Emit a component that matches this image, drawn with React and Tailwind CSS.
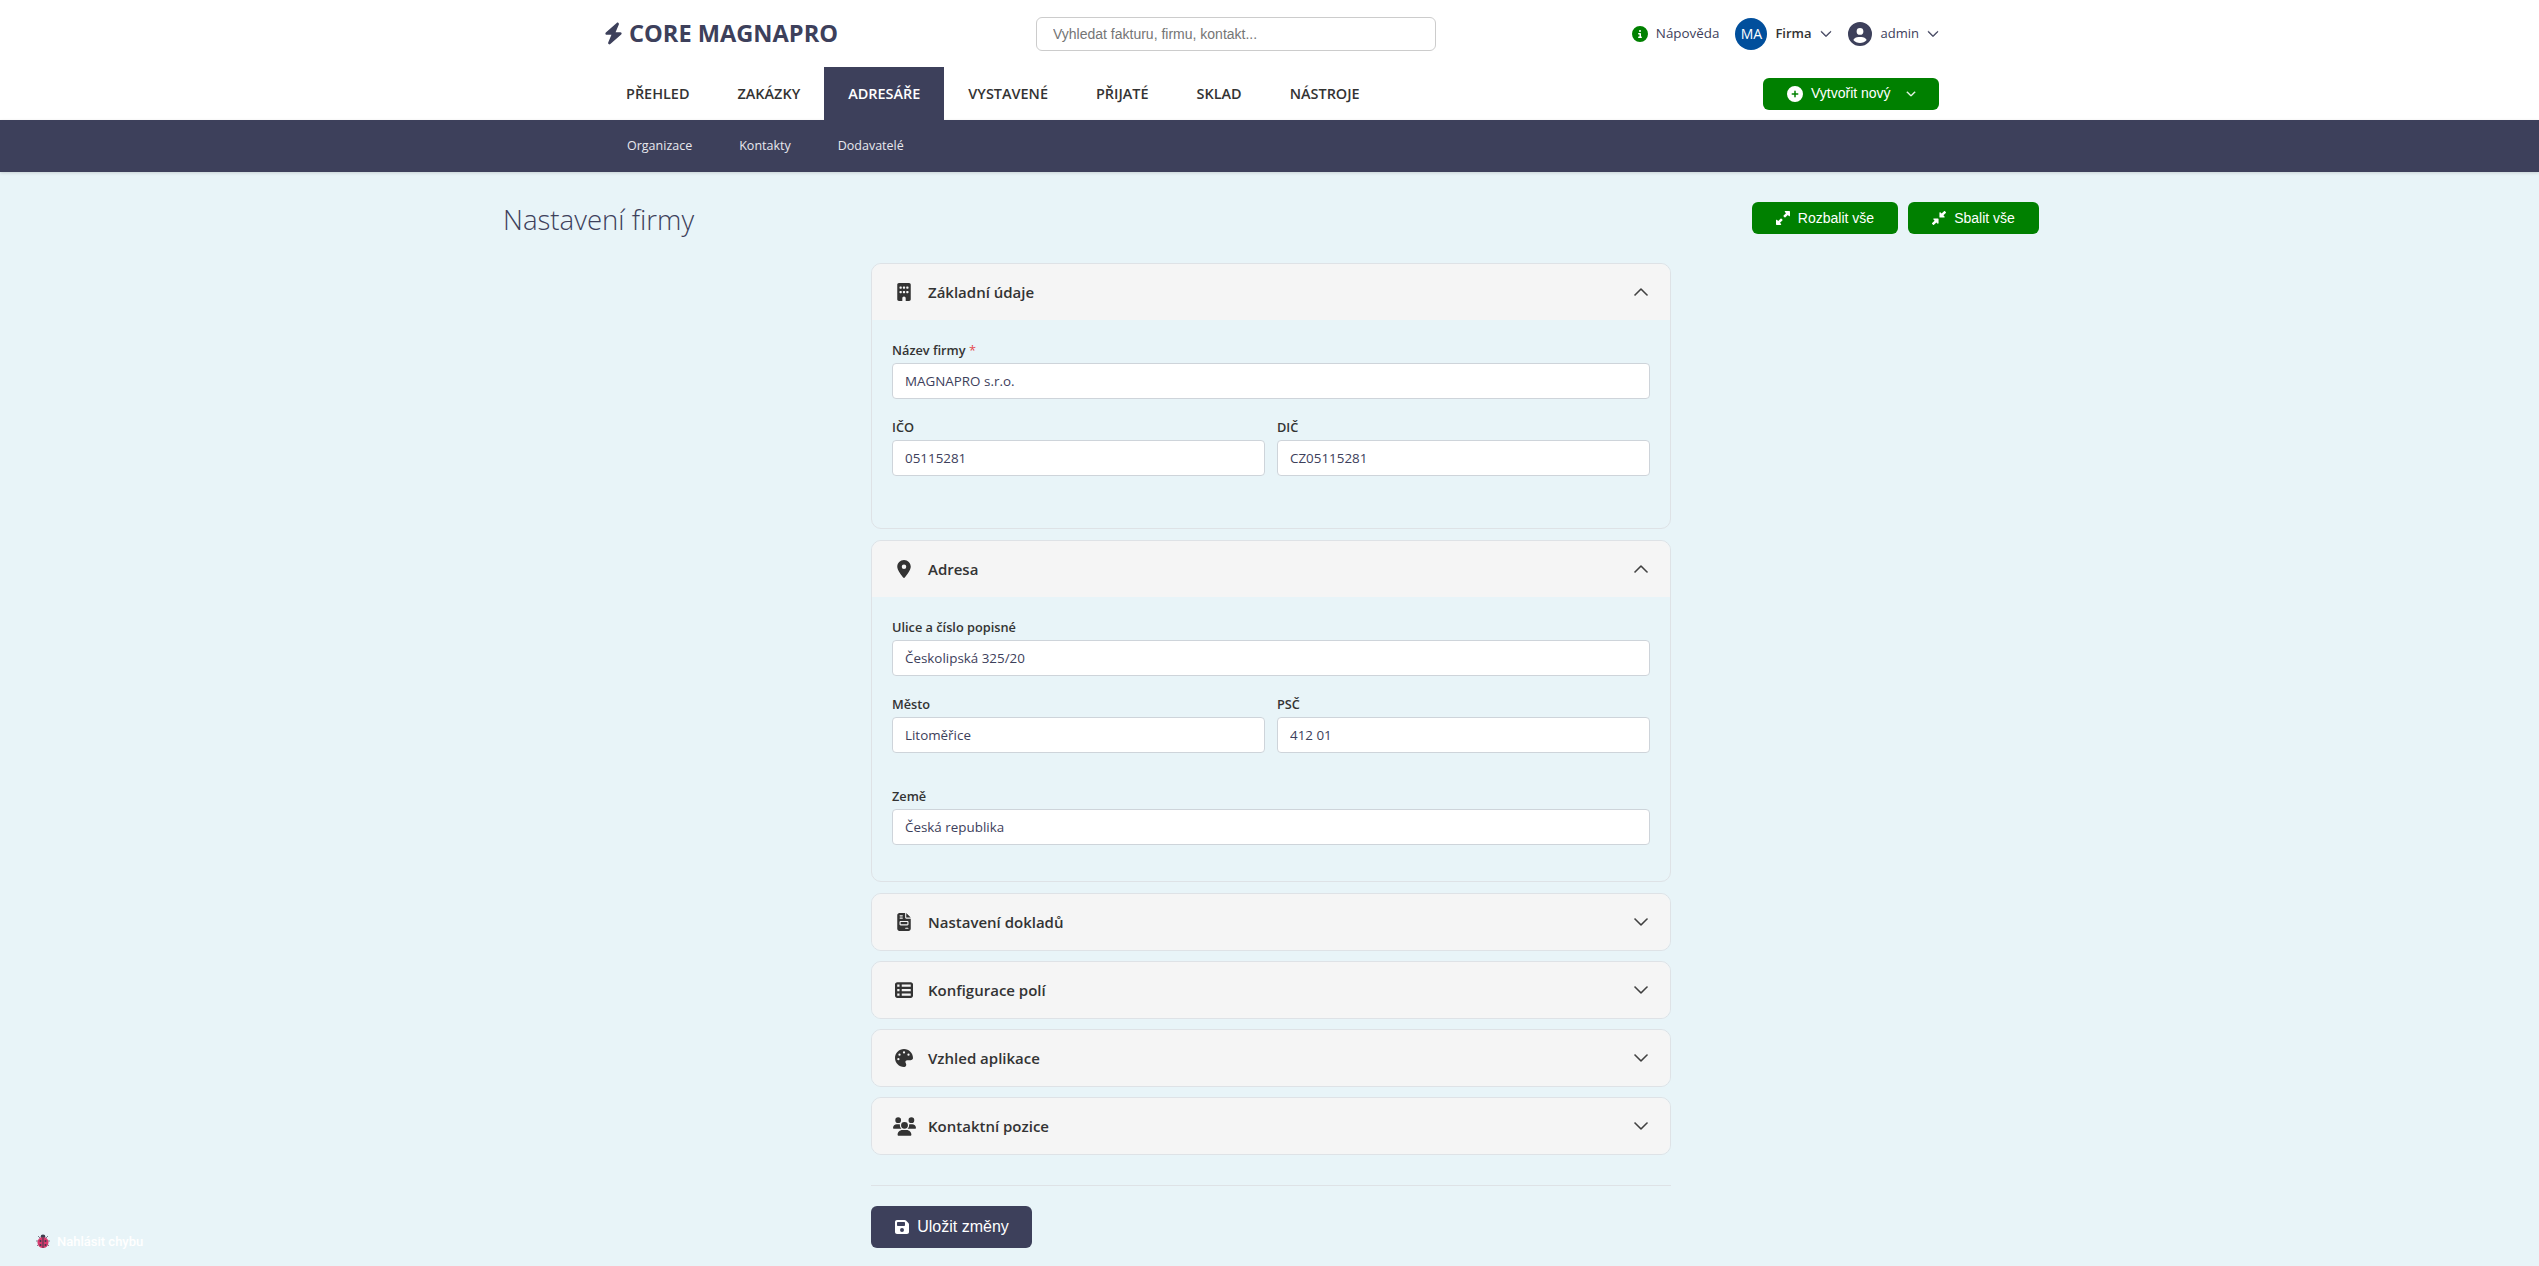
import { FaBolt, FaBuilding, FaLocationDot, FaFileInvoice, FaTableList, FaPalette, FaUsers, FaFloppyDisk, FaCircleUser, FaCircleInfo, FaCirclePlus, FaUpRightAndDownLeftFromCenter, FaDownLeftAndUpRightToCenter } from 'react-icons/fa6';

const NAV = ['Přehled', 'Zakázky', 'Adresáře', 'Vystavené', 'Přijaté', 'Sklad', 'Nástroje'];
const SUBNAV = ['Organizace', 'Kontakty', 'Dodavatelé'];
const COLLAPSED = [
  { title: 'Nastavení dokladů', icon: FaFileInvoice, iconSize: 18 },
  { title: 'Konfigurace polí', icon: FaTableList, iconSize: 18 },
  { title: 'Vzhled aplikace', icon: FaPalette, iconSize: 18 },
  { title: 'Kontaktní pozice', icon: FaUsers, iconSize: 23 },
];

function Chevron({ up, size = 16, weight = 0.6 }) {
  return (
    <svg viewBox="0 0 16 16" width={size} height={size} fill="currentColor" className={up ? 'rotate-180' : ''}>
      <path fillRule="evenodd" stroke="currentColor" strokeWidth={weight} d="M1.646 4.646a.5.5 0 0 1 .708 0L8 10.293l5.646-5.647a.5.5 0 0 1 .708.708l-6 6a.5.5 0 0 1-.708 0l-6-6a.5.5 0 0 1 0-.708z" />
    </svg>
  );
}

function Field({ label, value, required }) {
  return (
    <div>
      <label className="block h-5 mb-[3px] text-[12.75px] leading-5 font-semibold text-[#333]">
        {label}
        {required && <span className="text-[#e5484d] font-normal"> *</span>}
      </label>
      <input
        readOnly
        defaultValue={value}
        className="block w-full h-9 px-3 bg-white border border-[#ced4da] rounded-[4px] text-[13.4px] text-[#3d405b] outline-none"
      />
    </div>
  );
}

function AccordionCard({ title, icon: Icon, iconSize = 18, open, children }) {
  return (
    <section className="border border-[#dee2e6] rounded-[10px] overflow-hidden">
      <div className="flex items-center h-[56px] pl-[20px] pr-[21px] bg-[#f5f5f5] text-[#333]">
        <span className="flex justify-center w-[24px]">
          <Icon size={iconSize} />
        </span>
        <span className="ml-[12px] text-[15px] font-semibold">{title}</span>
        <span className="ml-auto">
          <Chevron up={open} />
        </span>
      </div>
      {children}
    </section>
  );
}

export default function App() {
  return (
    <div className="relative min-h-screen bg-[#e8f4f8] font-['Open_Sans',sans-serif] text-[#333]">
      <header className="bg-white">
        <div className="flex items-center h-[67px] pl-[604px] pr-[600px]">
          <div className="flex items-center w-[234px] text-[#3d405b]">
            <FaBolt size={23} />
            <span className="ml-[6px] text-[23.6px] font-bold leading-none whitespace-nowrap">CORE MAGNAPRO</span>
          </div>
          <input
            readOnly
            placeholder="Vyhledat fakturu, firmu, kontakt..."
            className="ml-[198px] w-[400px] h-[34px] px-4 bg-white border border-[#ccc] rounded-[6px] font-['Liberation_Sans',sans-serif] text-[14px] outline-none placeholder:text-[#757575]"
          />
          <div className="flex items-center ml-auto text-[#3d405b]">
            <FaCircleInfo size={16} className="text-[#008000]" />
            <span className="ml-2 text-[13.4px]">Nápověda</span>
            <span className="flex items-center justify-center ml-4 w-8 h-8 rounded-full bg-[#014f9c] text-white text-[14px]">MA</span>
            <span className="ml-2 text-[13px] font-semibold text-[#333]">Firma</span>
            <span className="ml-2"><Chevron size={12} weight={1} /></span>
            <FaCircleUser size={24} className="ml-[16px]" />
            <span className="ml-[9px] text-[13px]">admin</span>
            <span className="ml-2"><Chevron size={12} weight={1} /></span>
          </div>
        </div>
        <div className="flex items-center h-[53px] pl-[21px] pr-[600px] ml-[581px]">
          <nav className="flex h-full">
            {NAV.map((item) => (
              <a
                key={item}
                className={`flex items-center px-6 text-[14.45px] font-semibold uppercase ${item === 'Adresáře' ? 'bg-[#3d405b] text-white' : 'text-[#333]'}`}
              >
                {item}
              </a>
            ))}
          </nav>
          <button className="flex items-center ml-auto w-[176px] h-8 pl-6 bg-[#008000] rounded-[6px] font-['Liberation_Sans',sans-serif] text-[14px] text-white">
            <FaCirclePlus size={16} />
            <span className="ml-2">Vytvořit nový</span>
            <span className="ml-[15px]"><Chevron size={10} weight={1.4} /></span>
          </button>
        </div>
      </header>

      <div className="flex items-center gap-[47px] h-[52px] pl-[627px] bg-[#3d405b] shadow-[0_1px_3px_rgba(0,0,0,0.15)] text-[12.5px] text-[#e8e8ee]">
        {SUBNAV.map((item) => (
          <a key={item}>{item}</a>
        ))}
      </div>

      <main className="pl-[503px] pr-[500px] pb-[18px]">
        <div className="flex items-center justify-between pt-[30px]">
          <h1 className="mt-[2px] text-[27.6px] font-light text-[#3d405b] leading-[30px]">Nastavení firmy</h1>
          <div className="flex gap-[10px] font-['Liberation_Sans',sans-serif] text-[14px] text-white">
            <button className="flex items-center justify-center gap-[8px] w-[146px] h-8 bg-[#008000] rounded-[6px]">
              <FaUpRightAndDownLeftFromCenter size={14} />
              Rozbalit vše
            </button>
            <button className="flex items-center justify-center gap-[8px] w-[131px] h-8 bg-[#008000] rounded-[6px]">
              <FaDownLeftAndUpRightToCenter size={14} />
              Sbalit vše
            </button>
          </div>
        </div>

        <div className="w-[800px] mx-auto mt-[29px] flex flex-col gap-[11px]">
          <AccordionCard title="Základní údaje" icon={FaBuilding} open>
            <div className="px-[20px] pt-[20px] pb-[52px] flex flex-col gap-[18px]">
              <Field label="Název firmy" value="MAGNAPRO s.r.o." required />
              <div className="grid grid-cols-2 gap-3">
                <Field label="IČO" value="05115281" />
                <Field label="DIČ" value="CZ05115281" />
              </div>
            </div>
          </AccordionCard>

          <AccordionCard title="Adresa" icon={FaLocationDot} open>
            <div className="px-[20px] pt-[20px] pb-[36px]">
              <Field label="Ulice a číslo popisné" value="Českolipská 325/20" />
              <div className="grid grid-cols-2 gap-3 mt-[18px]">
                <Field label="Město" value="Litoměřice" />
                <Field label="PSČ" value="412 01" />
              </div>
              <div className="mt-[33px]">
                <Field label="Země" value="Česká republika" />
              </div>
            </div>
          </AccordionCard>

          <div className="flex flex-col gap-[10px]">
            {COLLAPSED.map((card) => (
              <AccordionCard key={card.title} title={card.title} icon={card.icon} iconSize={card.iconSize} />
            ))}
          </div>

          <div className="mt-[19px] border-t border-[#dee2e6] pt-[20px]">
            <button className="flex items-center justify-center gap-[7px] w-[161px] h-[42px] bg-[#3d405b] rounded-[6px] font-['Liberation_Sans',sans-serif] text-[16px] text-white">
              <FaFloppyDisk size={16} />
              Uložit změny
            </button>
          </div>
        </div>
      </main>

      <div className="absolute left-[35px] bottom-[15px] flex items-center gap-[6px] font-['Roboto',sans-serif] text-[13px] font-medium text-white">
        <svg viewBox="0 0 16 16" width="16" height="16">
          <path d="M3 3 5 5M13 3l-2 2M1 8h2M13 8h2M2 13l2-2M14 13l-2-2" stroke="#7c7c8c" strokeWidth="1" />
          <circle cx="8" cy="4" r="2.4" fill="#3d3d4d" />
          <circle cx="8" cy="9.5" r="5.5" fill="#d83a6e" />
          <path d="M8 4v11" stroke="#3d3d4d" strokeWidth="1" />
          <circle cx="5.5" cy="8" r="1" fill="#3d3d4d" />
          <circle cx="10.5" cy="8" r="1" fill="#3d3d4d" />
          <circle cx="5.5" cy="12" r="1" fill="#3d3d4d" />
          <circle cx="10.5" cy="12" r="1" fill="#3d3d4d" />
        </svg>
        Nahlásit chybu
      </div>
    </div>
  );
}
